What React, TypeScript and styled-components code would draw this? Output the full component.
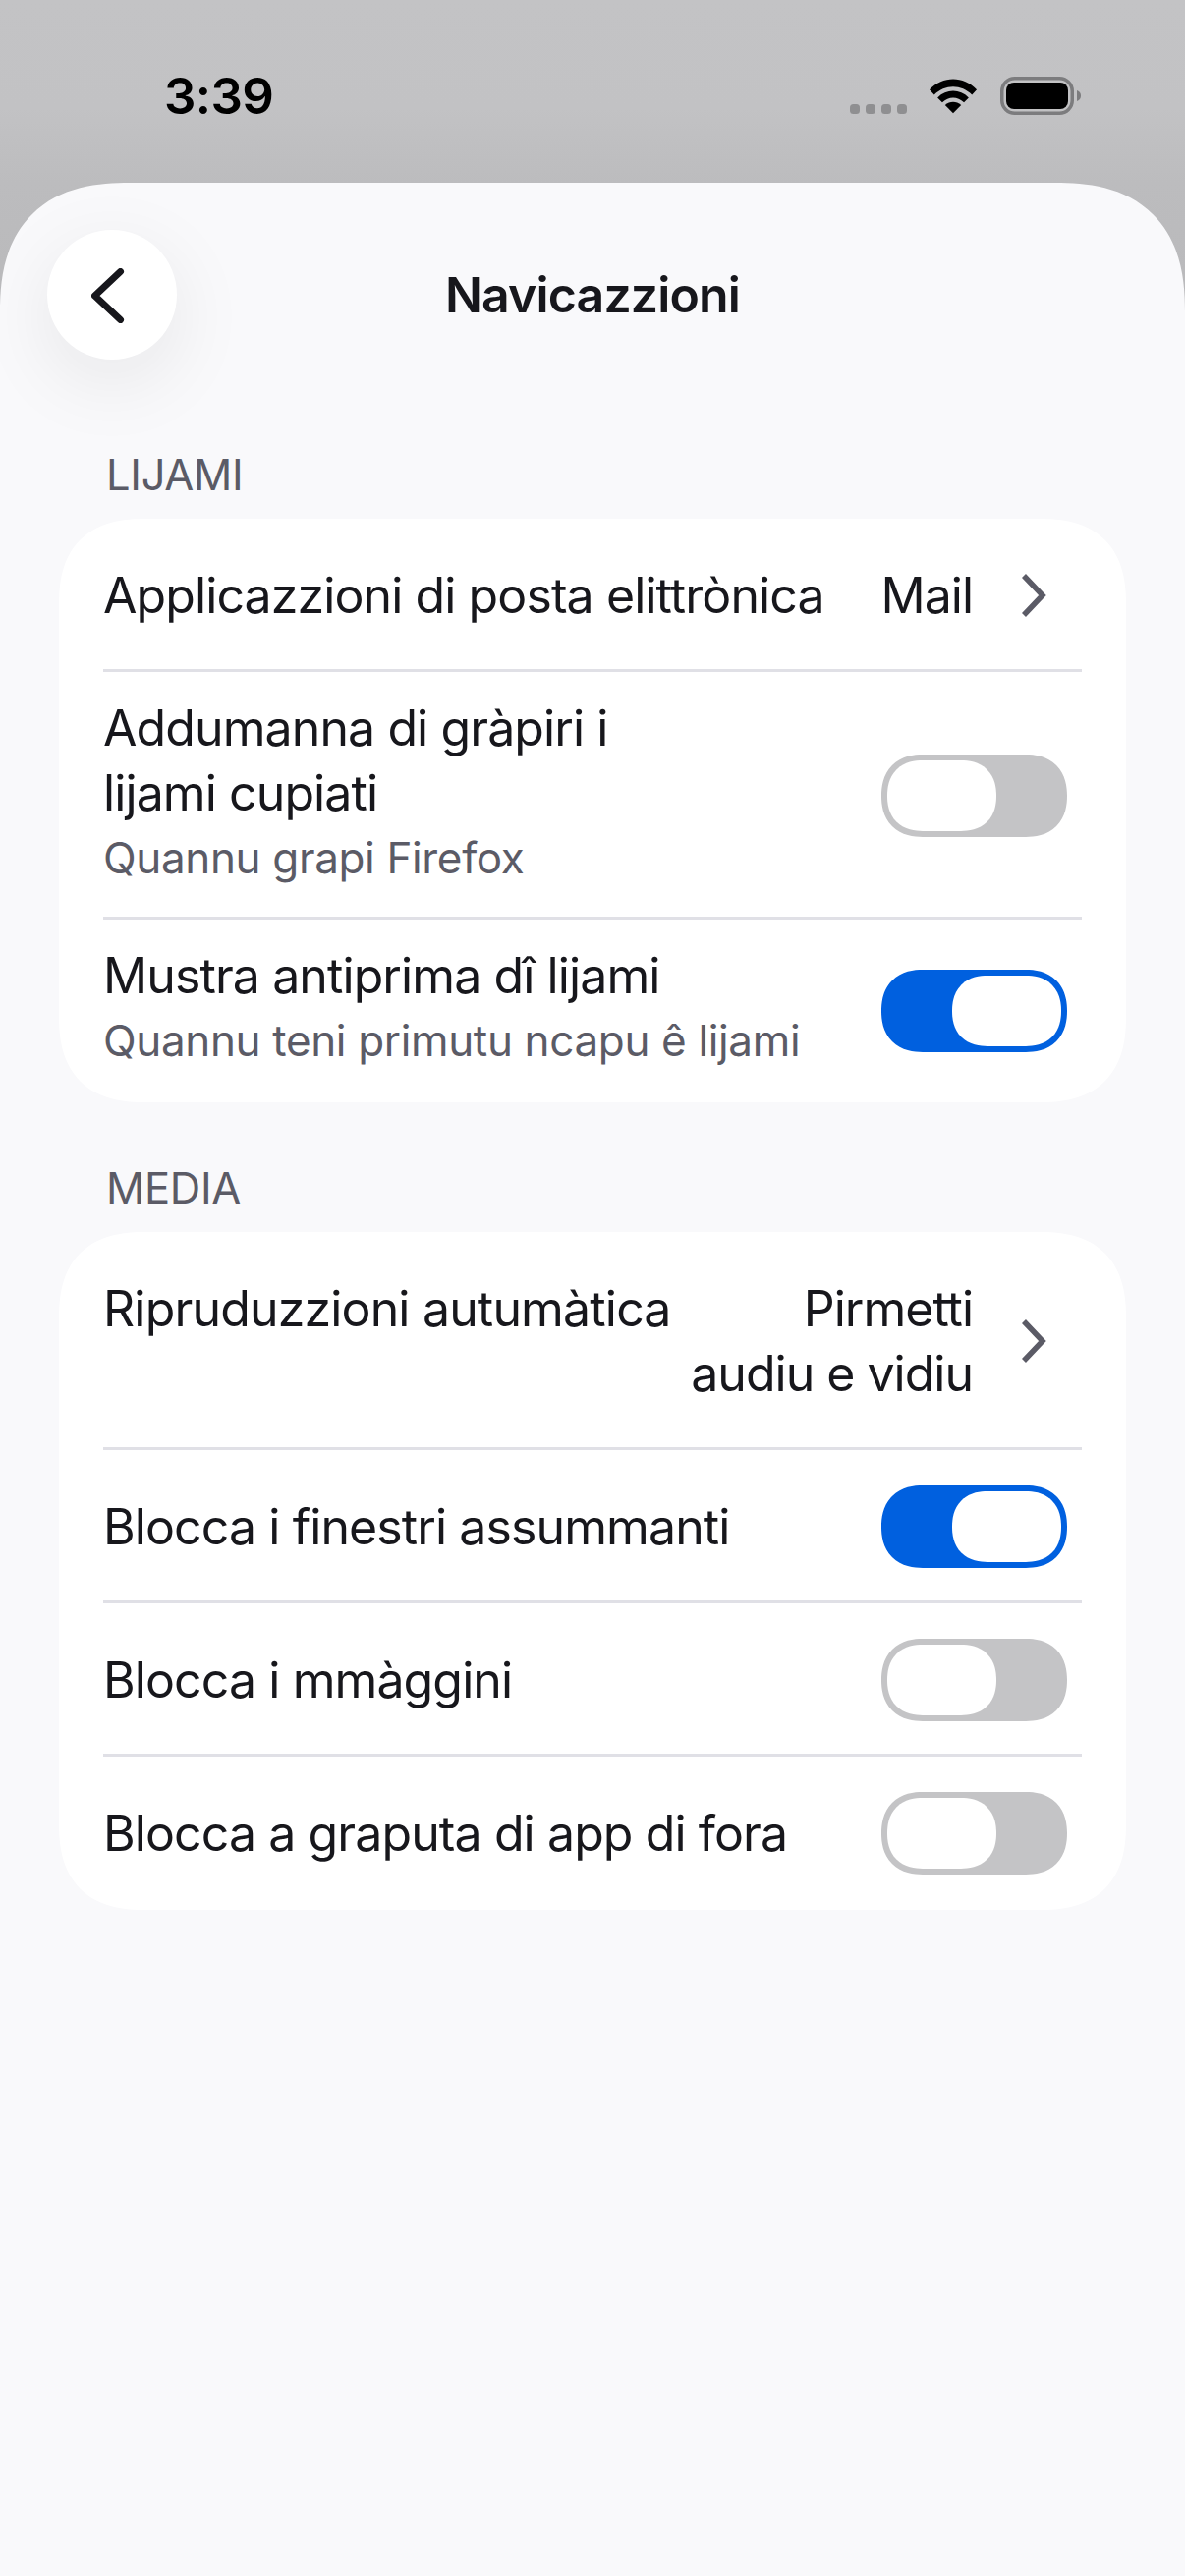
import React from "react";
import styled, { createGlobalStyle } from "styled-components";

const Global = createGlobalStyle`
  html, body { margin: 0; padding: 0; background: #c1c1c3; }
  body { font-family: Inter, "Liberation Sans", sans-serif; -webkit-font-smoothing: antialiased; }
`;

const Screen = styled.div`
  width: 1206px;
  height: 2622px;
  display: flex;
  flex-direction: column;
  overflow: hidden;
  background: linear-gradient(180deg, #c3c3c5 0, #c2c2c4 110px, #bcbcbe 186px, #b9b9bb 320px);
`;

const StatusBar = styled.div`
  height: 186px;
  flex: none;
  display: flex;
  justify-content: space-between;
  align-items: flex-start;
  padding: 71px 106px 0 167px;
  box-sizing: border-box;
`;

const Clock = styled.div`
  font-size: 51px;
  line-height: 54px;
  font-weight: 600;
  letter-spacing: -0.6px;
  color: #000;
`;

const StatusIcons = styled.div`
  display: flex;
  align-items: flex-start;
`;

const Dots = styled.svg`
  margin-top: 35px;
  display: block;
`;

const Wifi = styled.svg`
  margin: 8px 0 0 22px;
  display: block;
`;

const Battery = styled.svg`
  margin: 7px 0 0 23px;
  display: block;
`;

const Sheet = styled.div`
  flex: 1;
  background: #f9f9fb;
  border-radius: 132px 132px 0 0;
  corner-shape: superellipse(1.3);
  padding: 48px 60px 0;
  display: flex;
  flex-direction: column;
  overflow: hidden;
`;

const Header = styled.div`
  height: 132px;
  margin-left: -12px;
  display: flex;
  align-items: center;
  position: relative;
`;

const BackButton = styled.div`
  width: 132px;
  height: 132px;
  border-radius: 50%;
  background: #fff;
  box-shadow: 0 22px 80px rgba(20, 20, 30, 0.08);
  display: flex;
  align-items: center;
  justify-content: center;
`;

const BackIcon = styled.svg`
  margin: 2px 0 0 -9px;
  display: block;
`;

const Title = styled.div`
  position: absolute;
  left: 0;
  right: -12px;
  text-align: center;
  font-size: 50px;
  line-height: 60px;
  font-weight: 600;
  letter-spacing: -0.85px;
  color: #17171c;
`;

const SectionLabel = styled.div<{ $top: number }>`
  margin: ${(p) => p.$top}px 0 0 48px;
  font-size: 43.5px;
  line-height: 50px;
  height: 50px;
  font-weight: 400;
  letter-spacing: -0.3px;
  color: #5b5b66;
`;

const Card = styled.div`
  margin-top: 20px;
  background: #fff;
  border-radius: 88px;
  corner-shape: superellipse(1.3);
  padding: 0 45px;
`;

const Row = styled.div<{ $h: number }>`
  height: ${(p) => p.$h}px;
  box-sizing: border-box;
  padding-top: 3px;
  display: flex;
  align-items: center;
  justify-content: space-between;
  border-bottom: 3px solid #e0e0e6;
  &:last-child {
    border-bottom-color: transparent;
  }
`;

const TextStack = styled.div`
  display: flex;
  flex-direction: column;
  padding-bottom: 6px;
`;

const Primary = styled.div`
  font-size: 50px;
  line-height: 66px;
  letter-spacing: -0.9px;
  color: #17171c;
  white-space: nowrap;
`;

const PrimaryTop = styled(Primary)`
  align-self: flex-start;
  margin-top: 42px;
  letter-spacing: -0.83px;
`;

const Secondary = styled.div`
  font-size: 44px;
  line-height: 66px;
  letter-spacing: -0.35px;
  color: #5b5b66;
  white-space: nowrap;
`;

const Value = styled.div`
  display: flex;
  align-items: center;
`;

const ValueText = styled.div`
  font-size: 50px;
  line-height: 66px;
  letter-spacing: -1px;
  color: #17171c;
  text-align: right;
  white-space: nowrap;
`;

const Chevron = styled.svg`
  margin: 0 36px 0 50px;
  flex: none;
  display: block;
`;

const Track = styled.div<{ $on: boolean }>`
  width: 189px;
  height: 84px;
  margin-right: 15px;
  flex: none;
  box-sizing: border-box;
  border-radius: 42px;
  corner-shape: superellipse(1.2);
  padding: 6px;
  display: flex;
  justify-content: ${(p) => (p.$on ? "flex-end" : "flex-start")};
  background: ${(p) => (p.$on ? "#0060df" : "#c4c4c6")};
`;

const Thumb = styled.div`
  width: 111px;
  height: 72px;
  border-radius: 36px;
  corner-shape: superellipse(1.2);
  background: #fff;
`;

const Toggle = ({ on }: { on: boolean }) => (
  <Track $on={on}>
    <Thumb />
  </Track>
);

const Arrow = () => (
  <Chevron width="25" height="44" viewBox="0 0 25 44" fill="none">
    <path d="M2 2 L21 22 L2 42" stroke="#5b5b66" strokeWidth="5.5" strokeLinejoin="miter" />
  </Chevron>
);

export default function App() {
  return (
    <Screen>
      <Global />
      <StatusBar>
        <Clock>3:39</Clock>
        <StatusIcons>
          <Dots width="58" height="10" viewBox="0 0 58 10">
            <g fill="#8f8f91">
              <rect x="0" y="0" width="10" height="10" rx="3.5" />
              <rect x="16" y="0" width="10" height="10" rx="3.5" />
              <rect x="32" y="0" width="10" height="10" rx="3.5" />
              <rect x="48" y="0" width="10" height="10" rx="3.5" />
            </g>
          </Dots>
          <Wifi width="50" height="37" viewBox="0 0 52 38">
            <path d="M1 12.500 C15 -2.500 37 -2.500 51 12.500 L46 18 C34.500 6.500 17.500 6.500 6 18 Z" fill="#000" />
            <path d="M9.500 21 C19 11.500 33 11.500 42.500 21 L37.500 26 C30.500 19.500 21.500 19.500 14.500 26 Z" fill="#000" />
            <path d="M17.500 29 C22.500 24.500 29.500 24.500 34.500 29 L26 37.500 Z" fill="#000" />
          </Wifi>
          <Battery width="82" height="39" viewBox="0 0 82 39">
            <rect x="1.750" y="1.750" width="71.500" height="35.500" rx="13" fill="none" stroke="#7c7c7e" strokeWidth="3.500" />
            <rect x="6" y="6" width="63" height="27" rx="8" fill="#000" />
            <path d="M78 14 C81 15 82 17 82 19.500 C82 22 81 24 78 25 Z" fill="#7c7c7e" />
          </Battery>
        </StatusIcons>
      </StatusBar>
      <Sheet>
        <Header>
          <BackButton>
            <BackIcon width="34" height="56" viewBox="0 0 34 56" fill="none">
              <path d="M29.500 3.500 L3.500 28 L29.500 52.500" stroke="#17171c" strokeWidth="7" strokeLinecap="round" strokeLinejoin="round" />
            </BackIcon>
          </BackButton>
          <Title>Navicazzioni</Title>
        </Header>
        <SectionLabel $top={92}>LIJAMI</SectionLabel>
        <Card>
          <Row $h={156}>
            <Primary>Applicazzioni di posta elittrònica</Primary>
            <Value>
              <ValueText>Mail</ValueText>
              <Arrow />
            </Value>
          </Row>
          <Row $h={252}>
            <TextStack>
              <Primary>
                Addumanna di gràpiri i
                <br />
                lijami cupiati
              </Primary>
              <Secondary>Quannu grapi Firefox</Secondary>
            </TextStack>
            <Toggle on={false} />
          </Row>
          <Row $h={186}>
            <TextStack>
              <Primary>Mustra antiprima dî lijami</Primary>
              <Secondary>Quannu teni primutu ncapu ê lijami</Secondary>
            </TextStack>
            <Toggle on={true} />
          </Row>
        </Card>
        <SectionLabel $top={62}>MEDIA</SectionLabel>
        <Card>
          <Row $h={222}>
            <PrimaryTop>Ripruduzzioni autumàtica</PrimaryTop>
            <Value>
              <ValueText>
                Pirmetti
                <br />
                audiu e vidiu
              </ValueText>
              <Arrow />
            </Value>
          </Row>
          <Row $h={156}>
            <Primary>Blocca i finestri assummanti</Primary>
            <Toggle on={true} />
          </Row>
          <Row $h={156}>
            <Primary>Blocca i mmàggini</Primary>
            <Toggle on={false} />
          </Row>
          <Row $h={156}>
            <Primary>Blocca a graputa di app di fora</Primary>
            <Toggle on={false} />
          </Row>
        </Card>
      </Sheet>
    </Screen>
  );
}
